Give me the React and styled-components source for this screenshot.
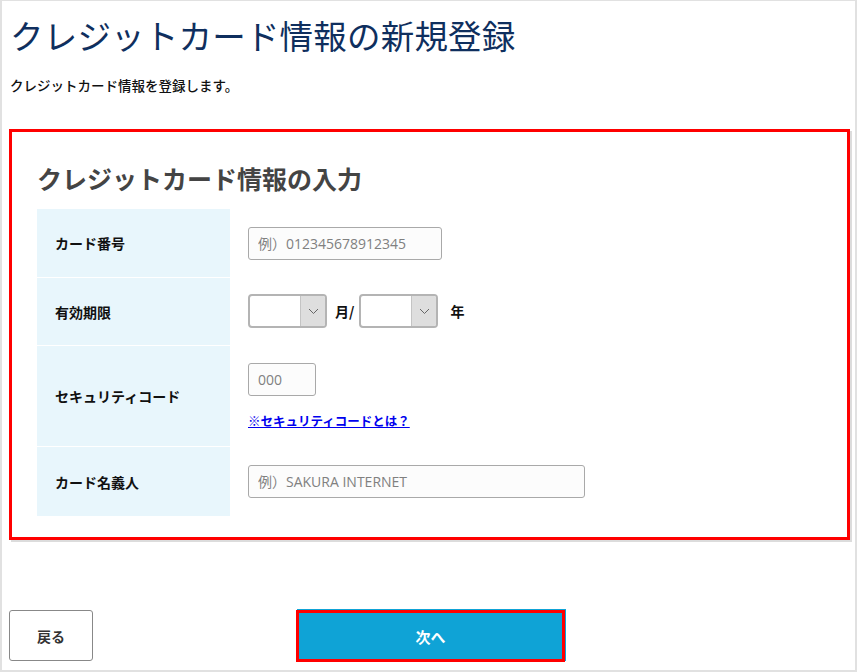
import React from "react";
import styled, { createGlobalStyle } from "styled-components";

const GlobalStyle = createGlobalStyle`
  html, body {
    margin: 0;
    padding: 0;
    background: #fff;
  }
  body {
    font-family: "Noto Sans CJK JP", "Noto Sans", sans-serif;
    color: #111;
  }
  * {
    box-sizing: border-box;
  }
`;

const Frame = styled.div`
  width: 857px;
  height: 672px;
  border: 2px solid #e1e1e1;
  border-top-width: 1px;
  display: flex;
  flex-direction: column;
`;

const Title = styled.h1`
  margin: 11px 0 0 8px;
  font-size: 33.5px;
  font-weight: 400;
  line-height: 46px;
  color: #0f2f5e;
  letter-spacing: 0.2px;
`;

const Lead = styled.p`
  margin: 17px 0 0 8px;
  font-size: 13.5px;
  font-weight: 500;
  line-height: 20px;
  color: #111;
`;

const Card = styled.section`
  margin: 34px 0 0 7px;
  width: 841px;
  border: 3px solid #ff0000;
  box-shadow: 2px 2px 0 #dcdcdc;
  padding: 25px 0 21px 25px;
`;

const CardHeading = styled.h2`
  margin: 0 0 10px 0;
  font-size: 25px;
  line-height: 42px;
  font-weight: 700;
  color: #444;
`;

const Table = styled.div`
  display: grid;
  grid-template-columns: 193px 1fr;
`;

const Label = styled.div`
  background: #e8f6fc;
  display: flex;
  align-items: center;
  padding-left: 18px;
  font-size: 14px;
  font-weight: 700;
  color: #111;
  border-bottom: ${(p) => (p.last ? "0" : "1px solid #fff")};
  min-height: ${(p) => p.h}px;
`;

const Cell = styled.div`
  padding: ${(p) => p.pt}px 18px 0 18px;
  display: flex;
  flex-direction: column;
  align-items: flex-start;
`;

const Inline = styled.div`
  display: flex;
  align-items: center;
`;

const TextInput = styled.input`
  width: ${(p) => p.w}px;
  height: 33px;
  border: 1px solid #a9a9a9;
  border-radius: 3px;
  background: #fcfcfc;
  padding: 0 9px;
  font-family: "Open Sans", "Noto Sans CJK JP", sans-serif;
  font-size: 14px;
  color: #333;
  outline: none;
  &::placeholder {
    color: #808080;
  }
`;

const Select = styled.div`
  width: 79px;
  height: 34px;
  border: 2px solid #b4b4b4;
  border-radius: 4px;
  background: #fff;
  display: flex;
  overflow: hidden;
`;

const SelectValue = styled.div`
  flex: 1;
`;

const SelectArrow = styled.div`
  width: 25px;
  background: #dedede;
  border-left: 1px solid #c4c4c4;
  display: flex;
  align-items: center;
  justify-content: center;
`;

const Unit = styled.span`
  font-size: 14px;
  font-weight: 700;
  color: #111;
  margin: 0 ${(p) => p.mr}px 0 ${(p) => p.ml}px;
`;

const HelpLink = styled.a`
  margin-top: 17px;
  font-size: 12.5px;
  font-weight: 700;
  color: #0000ee;
  text-decoration: underline;
  line-height: 16px;
  cursor: pointer;
`;

const Actions = styled.div`
  margin-top: auto;
  margin-bottom: 8px;
  display: grid;
  grid-template-columns: 1fr 270px 1fr;
  align-items: start;
  padding-left: 7px;
`;

const BackButton = styled.button`
  justify-self: start;
  width: 84px;
  height: 51px;
  border: 1px solid #888;
  border-radius: 3px;
  background: #fff;
  font-family: "Noto Sans CJK JP", sans-serif;
  font-size: 14px;
  font-weight: 700;
  color: #333;
`;

const NextButton = styled.button`
  height: 52px;
  width: 269px;
  margin-left: -1px;
  background: #0fa3d6;
  border: 3px solid #ff0000;
  box-shadow: 1px -1px 0 #0fa3d6;
  font-family: "Noto Sans CJK JP", sans-serif;
  font-size: 15px;
  font-weight: 700;
  color: #fff;
`;

const Chevron = () => (
  <svg width="11" height="7" viewBox="0 0 11 7">
    <path d="M1 1l4.5 4.5L10 1" fill="none" stroke="#666" strokeWidth="1" />
  </svg>
);

const Dropdown = () => (
  <Select>
    <SelectValue />
    <SelectArrow>
      <Chevron />
    </SelectArrow>
  </Select>
);

export default function App() {
  return (
    <>
      <GlobalStyle />
      <Frame>
        <Title>クレジットカード情報の新規登録</Title>
        <Lead>クレジットカード情報を登録します。</Lead>
        <Card>
          <CardHeading>クレジットカード情報の入力</CardHeading>
          <Table>
            <Label h={69}>カード番号</Label>
            <Cell pt={18}>
              <TextInput w={194} placeholder="例）012345678912345" />
            </Cell>

            <Label h={68}>有効期限</Label>
            <Cell pt={16}>
              <Inline>
                <Dropdown />
                <Unit ml={8} mr={5}>月/</Unit>
                <Dropdown />
                <Unit ml={12} mr={0}>年</Unit>
              </Inline>
            </Cell>

            <Label h={101}>セキュリティコード</Label>
            <Cell pt={17}>
              <TextInput w={68} placeholder="000" />
              <HelpLink>※セキュリティコードとは？</HelpLink>
            </Cell>

            <Label h={69} last>
              カード名義人
            </Label>
            <Cell pt={18}>
              <TextInput w={337} placeholder="例）SAKURA INTERNET" />
            </Cell>
          </Table>
        </Card>
        <Actions>
          <BackButton>戻る</BackButton>
          <NextButton>次へ</NextButton>
          <span />
        </Actions>
      </Frame>
    </>
  );
}
